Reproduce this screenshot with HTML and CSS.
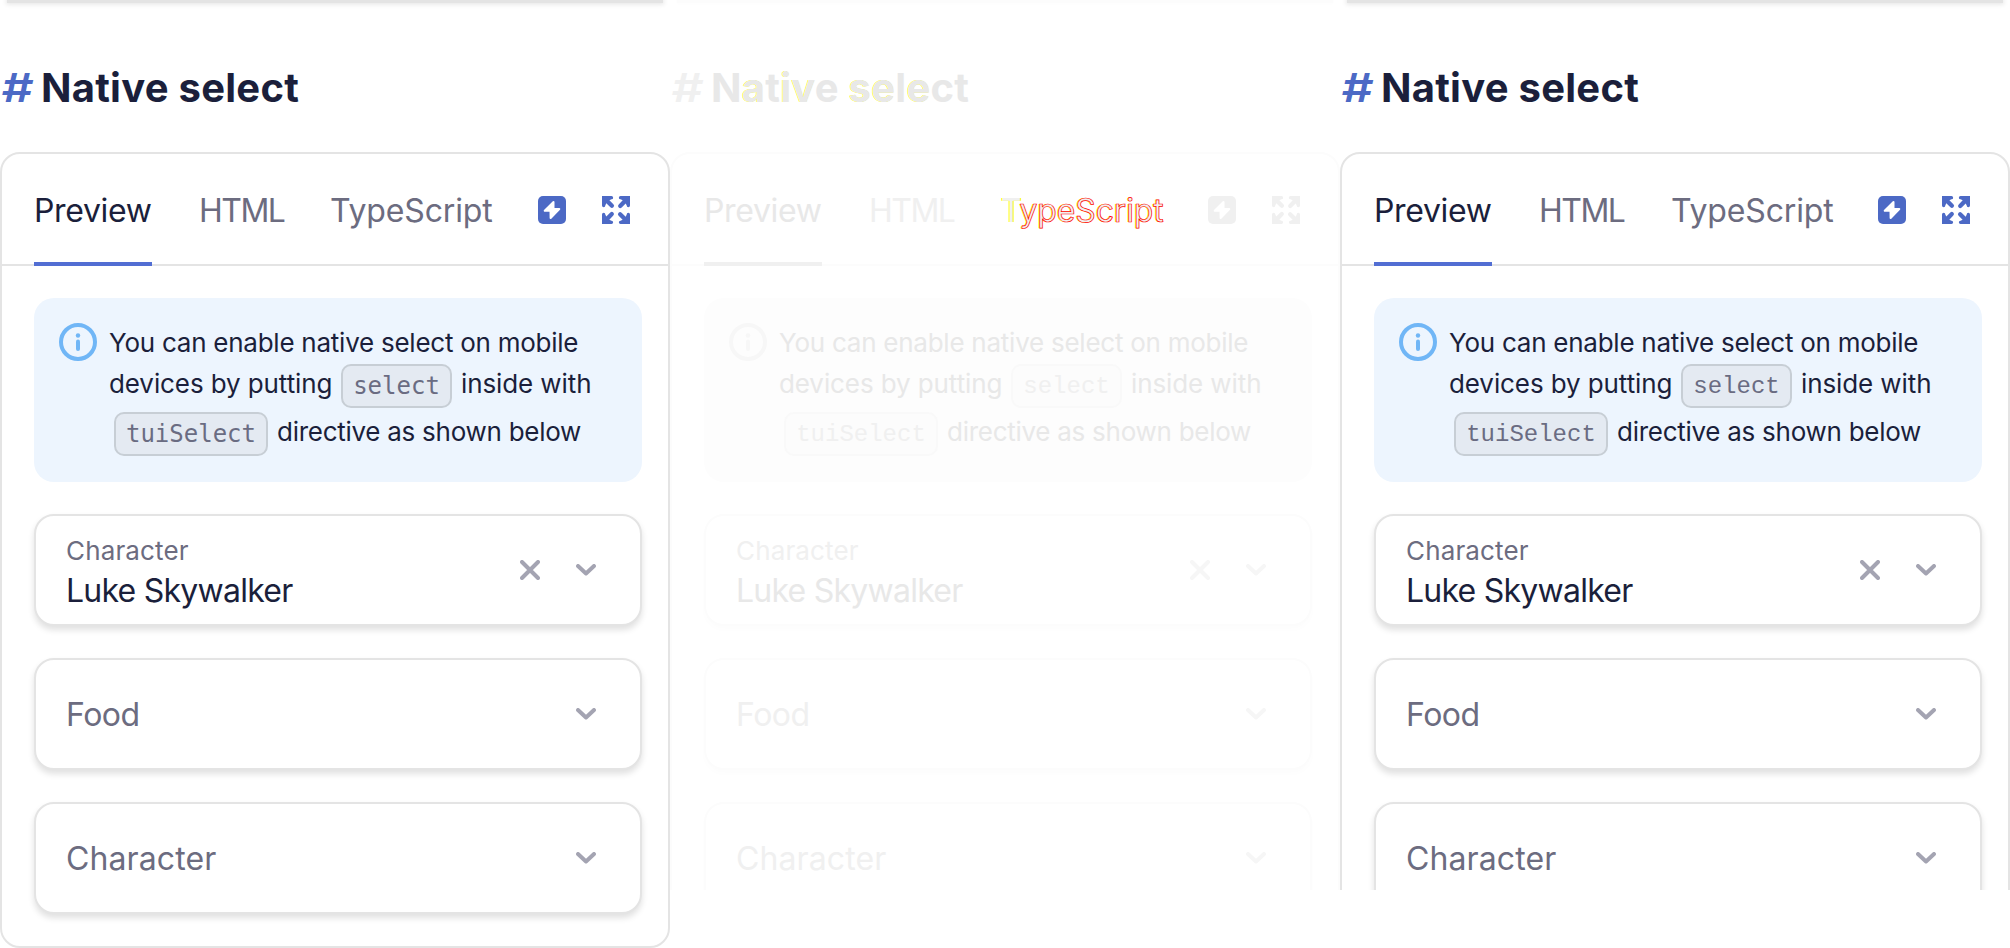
FILE: index.html
```
<!DOCTYPE html>
<html lang="en">
<head>
<meta charset="utf-8">
<title>Native select</title>
<link rel="stylesheet" href="styles.css">
</head>
<body>
<svg class="sprite" width="0" height="0">
  <symbol id="bolt" viewBox="0 0 28 28"><rect width="28" height="28" rx="5" fill="currentColor"/><path d="M15.500 6 6.700 14.700h5.800L12.600 22l8.700-9h-5.800z" fill="#fff" stroke="#fff" stroke-width="2" stroke-linejoin="round"/></symbol>
  <symbol id="expand" viewBox="0 0 28 28"><g fill="currentColor"><path id="arm" d="M0 0h9.500a1.600 1.600 0 0 1 0 3.300L7.400 4.300l4 4a2 2 0 0 1-3 3L4.300 7.300 3.300 9.500a1.600 1.600 0 0 1-3.300 0z"/><use href="#arm" transform="rotate(90 14 14)"/><use href="#arm" transform="rotate(180 14 14)"/><use href="#arm" transform="rotate(270 14 14)"/></g></symbol>
  <symbol id="info" viewBox="0 0 38 38"><circle cx="19" cy="19" r="17" fill="none" stroke="currentColor" stroke-width="4"/><circle cx="19" cy="12.500" r="2.200" fill="currentColor"/><path d="M19 18.500v7.500" stroke="currentColor" stroke-width="4" stroke-linecap="round"/></symbol>
  <symbol id="close" viewBox="0 0 20 20"><path d="m2 2 16 16M18 2 2 18" stroke="currentColor" stroke-width="4" stroke-linecap="round"/></symbol>
  <symbol id="chevron" viewBox="0 0 20 12"><path d="m2 2 8 7.500L18 2" fill="none" stroke="currentColor" stroke-width="4" stroke-linecap="round" stroke-linejoin="round"/></symbol>
</svg>
<main class="panels">
  <section class="panel before">
    <div class="previous"></div>
    <h2 class="title"><span class="hash">#</span><span class="name">Native select</span></h2>
    <div class="card">
      <nav class="tabs"><span class="tab active">Preview</span><span class="tab html">HTML</span><span class="tab ts">TypeScript</span><svg class="bolt"><use href="#bolt"/></svg><svg class="expand"><use href="#expand"/></svg></nav>
      <div class="content">
        <div class="notice"><svg class="info"><use href="#info"/></svg><div class="message"><div class="line l1">You can enable native select on mobile</div><div class="line l2"><span class="a">devices by putting</span><code>select</code><span class="b">inside with</span></div><div class="line l3"><code>tuiSelect</code><span class="c">directive as shown below</span></div></div></div>
        <div class="field"><div class="text"><span class="label">Character</span><span class="value luke">Luke Skywalker</span></div><svg class="close"><use href="#close"/></svg><svg class="chevron"><use href="#chevron"/></svg></div>
        <div class="field"><span class="value food">Food</span><svg class="chevron"><use href="#chevron"/></svg></div>
        <div class="field"><span class="value char">Character</span><svg class="chevron"><use href="#chevron"/></svg></div>
      </div>
    </div>
  </section>
  <section class="panel diff">
    <div class="previous"></div>
    <h2 class="title"><span class="hash">#</span><span class="name">N<i>a</i>t<i>iv</i>e <i>se</i>l<i>e</i>ct</span></h2>
    <div class="card">
      <nav class="tabs"><span class="tab active">Preview</span><span class="tab html">HTML</span><span class="tab ts"><i>T</i>ypeScript</span><svg class="bolt"><use href="#bolt"/></svg><svg class="expand"><use href="#expand"/></svg></nav>
      <div class="content">
        <div class="notice"><svg class="info"><use href="#info"/></svg><div class="message"><div class="line l1">You can enable native select on mobile</div><div class="line l2"><span class="a">devices by putting</span><code>select</code><span class="b">inside with</span></div><div class="line l3"><code>tuiSelect</code><span class="c">directive as shown below</span></div></div></div>
        <div class="field"><div class="text"><span class="label">Character</span><span class="value luke">Luke Skywalker</span></div><svg class="close"><use href="#close"/></svg><svg class="chevron"><use href="#chevron"/></svg></div>
        <div class="field"><span class="value food">Food</span><svg class="chevron"><use href="#chevron"/></svg></div>
        <div class="field"><span class="value char">Character</span><svg class="chevron"><use href="#chevron"/></svg></div>
      </div>
    </div>
  </section>
  <section class="panel after">
    <div class="previous"></div>
    <h2 class="title"><span class="hash">#</span><span class="name">Native select</span></h2>
    <div class="card">
      <nav class="tabs"><span class="tab active">Preview</span><span class="tab html">HTML</span><span class="tab ts">TypeScript</span><svg class="bolt"><use href="#bolt"/></svg><svg class="expand"><use href="#expand"/></svg></nav>
      <div class="content">
        <div class="notice"><svg class="info"><use href="#info"/></svg><div class="message"><div class="line l1">You can enable native select on mobile</div><div class="line l2"><span class="a">devices by putting</span><code>select</code><span class="b">inside with</span></div><div class="line l3"><code>tuiSelect</code><span class="c">directive as shown below</span></div></div></div>
        <div class="field"><div class="text"><span class="label">Character</span><span class="value luke">Luke Skywalker</span></div><svg class="close"><use href="#close"/></svg><svg class="chevron"><use href="#chevron"/></svg></div>
        <div class="field"><span class="value food">Food</span><svg class="chevron"><use href="#chevron"/></svg></div>
        <div class="field"><span class="value char">Character</span><svg class="chevron"><use href="#chevron"/></svg></div>
      </div>
    </div>
  </section>
</main>
</body>
</html>
```
FILE: styles.css
```
* { box-sizing: border-box; }
body { margin: 0; background: #fff; font-family: Inter, "Liberation Sans", sans-serif; overflow: hidden; }
.sprite { display: block; height: 0; }
svg { flex: none; }
.panels { display: flex; align-items: flex-start; height: 948px; }
.panel {
  --ink: #1b1f3b; --muted: #6c6c80; --faint: #a4a4b2; --blue: #4c69c5; --underline: #526ed3;
  --line: #e4e4e4; --notice: #edf5fe; --info: #70b6f6; --code-bg: #e4eaf2; --code-line: #c7ced5; --code: #6a6c82; --shadow: rgba(0,0,0,.12);
  width: 670px; height: 948px; overflow: hidden; color: var(--ink);
}
.diff, .after { height: 890px; }
.diff {
  --ink: #e8e8e8; --muted: #f0f0f0; --faint: #f6f6f6; --blue: #f0f0f0; --underline: #f0f0f0;
  --line: #fcfcfc; --notice: #fdfdfd; --info: #f7f7f7; --code-bg: #fcfcfc; --code-line: #f9f9f9; --code: #f0f0f0; --shadow: rgba(0,0,0,.012);
}
.previous { height: 3px; margin: 0 7px; background: var(--line); box-shadow: 0 0 5px 1px var(--shadow); }
.title { display: flex; align-items: center; height: 149px; margin: 0; padding: 21px 0 0 1px; font-size: 40px; line-height: 48px; font-weight: 700; }
.title > span { white-space: pre; }
.hash { width: 40px; color: var(--blue); font-style: italic; font-weight: 600; transform: scaleX(1.24); transform-origin: left; }
.name { letter-spacing: .25px; }
.name i, .ts i { font-style: normal; }
.diff .name i { text-shadow: -.5px 0 #ff0; }
.card { height: 796px; border: 2px solid var(--line); border-radius: 20px; }
.tabs { display: flex; align-items: center; height: 112px; padding: 0 34px 0 32px; border-bottom: 2px solid var(--line); font-size: 32px; color: var(--muted); white-space: nowrap; }
.tab { height: 112px; line-height: 115px; flex: none; }
.tab.active { line-height: 113px; width: 118px; margin-bottom: -2px; color: var(--ink); border-bottom: 4px solid var(--underline); letter-spacing: -.35px; }
.tab.html { margin-left: 47px; width: 132px; letter-spacing: -1.5px; }
.tab.ts { width: 207px; letter-spacing: -.15px; }
.before .ts { text-indent: -1px; }
.diff .ts { -webkit-text-stroke: .7px #f00; text-shadow: -1px 0 #ff0; }
.diff .ts i { -webkit-text-stroke: 0; text-shadow: -1px 0 #ff0, 1px 0 #ff0; }
.bolt { width: 28px; height: 28px; color: var(--blue); margin: 2px 36px 0 0; }
.expand { width: 28px; height: 28px; margin-top: 2px; color: var(--blue); }
.content { display: flex; flex-direction: column; gap: 32px; padding: 32px 26px 0 32px; }
.notice { display: flex; height: 184px; border-radius: 20px; background: var(--notice); padding: 25px 0 0 25px; font-size: 26px; }
.info { width: 38px; height: 38px; color: var(--info); margin-right: 12px; }
.message { white-space: nowrap; }
.line { display: flex; align-items: center; height: 48px; }
.l1 { height: 38px; letter-spacing: -.25px; }
.l2 { height: 46px; }
.l2 span { letter-spacing: -.1px; margin-top: -1px; }
.l3 { height: 50px; }
.a { width: 232px; }
.b { margin-left: -1px; }
code { display: flex; justify-content: center; align-items: center; height: 44px; width: 111px; margin: 3px 10px 0 0; border: 2px solid var(--code-line); border-radius: 10px; background: var(--code-bg); color: var(--code); font: 24px/40px "DejaVu Sans Mono", monospace; }
.l3 code { width: 154px; margin-left: 5px; margin-right: 9px; }
.diff code, .after code { padding-top: 3px; font-family: "Liberation Mono", monospace; }
.c { letter-spacing: -.27px; margin-top: -1px; }
.field { display: flex; align-items: center; height: 112px; border: 2px solid var(--line); border-radius: 20px; padding: 0 44px 0 30px; background: #fff; box-shadow: 0 4px 6px var(--shadow); }
.text { display: flex; flex-direction: column; padding-top: 5px; }
.label { color: var(--muted); font-size: 26px; line-height: 36px; letter-spacing: .15px; }
.value { font-size: 32px; line-height: 42px; color: var(--muted); }
.luke { color: var(--ink); line-height: 43px; letter-spacing: -.75px; }
.food { letter-spacing: -.5px; padding-top: 2px; }
.char { letter-spacing: .1px; padding-top: 2px; }
.close { width: 20px; height: 20px; color: var(--faint); margin-left: auto; margin-right: 36px; }
.chevron { width: 20px; height: 12px; color: var(--faint); }
.field > .value + .chevron { margin-left: auto; }
```
